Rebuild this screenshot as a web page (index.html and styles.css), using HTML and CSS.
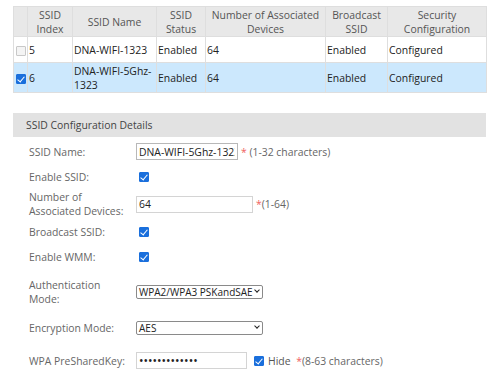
FILE: index.html
```html
<!DOCTYPE html>
<html lang="en">
<head>
    <meta charset="UTF-8">
    <title>SSID Configuration</title>
    <link rel="stylesheet" href="styles.css">
</head>
<body>
    <div class="page">
        <table class="ssid-table">
            <colgroup>
                <col class="c-sel"><col class="c-idx"><col class="c-name"><col class="c-status">
                <col class="c-dev"><col class="c-bcast"><col class="c-sec">
            </colgroup>
            <thead>
                <tr>
                    <th></th>
                    <th>SSID<br>Index</th>
                    <th>SSID Name</th>
                    <th>SSID<br>Status</th>
                    <th>Number of Associated<br>Devices</th>
                    <th>Broadcast<br>SSID</th>
                    <th>Security<br>Configuration</th>
                </tr>
            </thead>
            <tbody>
                <tr>
                    <td><input type="checkbox" class="chk"></td>
                    <td>5</td>
                    <td>DNA-WIFI-1323</td>
                    <td>Enabled</td>
                    <td>64</td>
                    <td>Enabled</td>
                    <td>Configured</td>
                </tr>
                <tr class="selected">
                    <td><input type="checkbox" class="chk" checked></td>
                    <td>6</td>
                    <td>DNA-WIFI-5Ghz-1323</td>
                    <td>Enabled</td>
                    <td>64</td>
                    <td>Enabled</td>
                    <td>Configured</td>
                </tr>
            </tbody>
        </table>

        <div class="section-title">SSID Configuration Details</div>

        <div class="form">
            <div class="row">
                <label class="lbl">SSID Name:</label>
                <div class="ctl">
                    <input type="text" class="txt txt-name" value="DNA-WIFI-5Ghz-1323">
                    <span class="req">*</span><span class="hint">&nbsp;(1-32 characters)</span>
                </div>
            </div>
            <div class="row">
                <label class="lbl">Enable SSID:</label>
                <div class="ctl"><input type="checkbox" class="chk" checked></div>
            </div>
            <div class="row tall">
                <label class="lbl">Number of<br>Associated Devices:</label>
                <div class="ctl">
                    <input type="text" class="txt txt-dev" value="64">
                    <span class="req">*</span><span class="hint">(1-64)</span>
                </div>
            </div>
            <div class="row">
                <label class="lbl">Broadcast SSID:</label>
                <div class="ctl"><input type="checkbox" class="chk" checked></div>
            </div>
            <div class="row">
                <label class="lbl">Enable WMM:</label>
                <div class="ctl"><input type="checkbox" class="chk" checked></div>
            </div>
            <div class="row tall spaced">
                <label class="lbl">Authentication<br>Mode:</label>
                <div class="ctl">
                    <div class="select">WPA2/WPA3 PSKandSAE<span class="arrow"></span></div>
                </div>
            </div>
            <div class="row spaced">
                <label class="lbl">Encryption Mode:</label>
                <div class="ctl">
                    <div class="select">AES<span class="arrow"></span></div>
                </div>
            </div>
            <div class="row spaced">
                <label class="lbl">WPA PreSharedKey:</label>
                <div class="ctl">
                    <input type="password" class="txt txt-key" value="1234567890123">
                    <input type="checkbox" class="chk chk-hide" checked>
                    <span class="hide-lbl">Hide</span>
                    <span class="req">&nbsp;*</span><span class="hint">(8-63 characters)</span>
                </div>
            </div>
        </div>
    </div>
</body>
</html>
```

FILE: styles.css
```css
body {
    margin: 0;
    background: #ffffff;
    font-family: "Open Sans", "Noto Sans", sans-serif;
    font-size: 10.4px;
    color: #222;
}

.page {
    padding: 6px 14px 0 13px;
}

.ssid-table {
    width: 473px;
    border-collapse: collapse;
    table-layout: fixed;
}

.c-sel { width: 14px; }
.c-idx { width: 45px; }
.c-name { width: 84px; }
.c-status { width: 49px; }
.c-dev { width: 120px; }
.c-bcast { width: 62px; }
.c-sec { width: 99px; }

.ssid-table th,
.ssid-table td {
    border: 1px solid #dedede;
    line-height: 14px;
    padding: 0 1px;
}

.ssid-table th {
    background: #e8e8e8;
    color: #555;
    font-weight: normal;
    text-align: center;
    height: 29px;
}

.ssid-table td {
    text-align: left;
    color: #222;
    height: 25px;
}

.ssid-table tr.selected td {
    background: #cce8fd;
    height: 29px;
}

.ssid-table td:first-child {
    padding: 0;
    text-align: center;
}

.chk {
    appearance: none;
    -webkit-appearance: none;
    width: 10px;
    height: 10px;
    margin: 0;
    border: 1px solid #c8c8c8;
    border-radius: 1px;
    background: #f4f4f4;
    vertical-align: middle;
    position: relative;
}

.chk:checked {
    background: #1a6fdc;
    border-color: #1a6fdc;
}

.chk:checked::after {
    content: "";
    position: absolute;
    left: 2px;
    top: 0px;
    width: 3px;
    height: 6px;
    border: solid #fff;
    border-width: 0 1.5px 1.5px 0;
    transform: rotate(40deg);
}

.ctl > .chk:first-child {
    margin-left: 3px;
}

.section-title {
    margin-top: 20px;
    background: #e2e2e2;
    color: #444;
    height: 24px;
    line-height: 24px;
    padding-left: 13px;
}

.form {
    margin-top: 2px;
}

.row {
    display: flex;
    align-items: center;
    height: 25px;
}

.row.tall {
    height: 30px;
}

.row.spaced {
    margin-top: 8px;
}

.lbl {
    width: 107px;
    padding-left: 16px;
    line-height: 14px;
    color: #666;
    flex-shrink: 0;
}

.ctl {
    display: flex;
    align-items: center;
}

.txt {
    box-sizing: border-box;
    height: 17px;
    border: 1px solid #d4d4d4;
    padding: 0 2px;
    font-family: inherit;
    font-size: 10.4px;
    color: #222;
    margin: 0;
}

.txt-name { width: 102px; border-color: #b8b8b8; }
.txt-dev { width: 117px; }
.txt-key { width: 111px; font-size: 12px; }

.chk-hide {
    margin-left: 7px;
}

.hide-lbl {
    margin-left: 4px;
    color: #555;
}

.req {
    color: #f06060;
    margin-left: 3px;
}

.hint {
    color: #666;
}

.select {
    box-sizing: border-box;
    width: 127px;
    height: 14px;
    line-height: 12px;
    font-size: 10px;
    border: 1px solid #8a8a8a;
    border-radius: 2px;
    padding: 0 9px 0 2px;
    color: #222;
    position: relative;
    white-space: nowrap;
    overflow: hidden;
}

.arrow {
    position: absolute;
    right: 3px;
    top: 2px;
    width: 3px;
    height: 3px;
    border: solid #222;
    border-width: 0 1.5px 1.5px 0;
    transform: rotate(45deg);
}
```
